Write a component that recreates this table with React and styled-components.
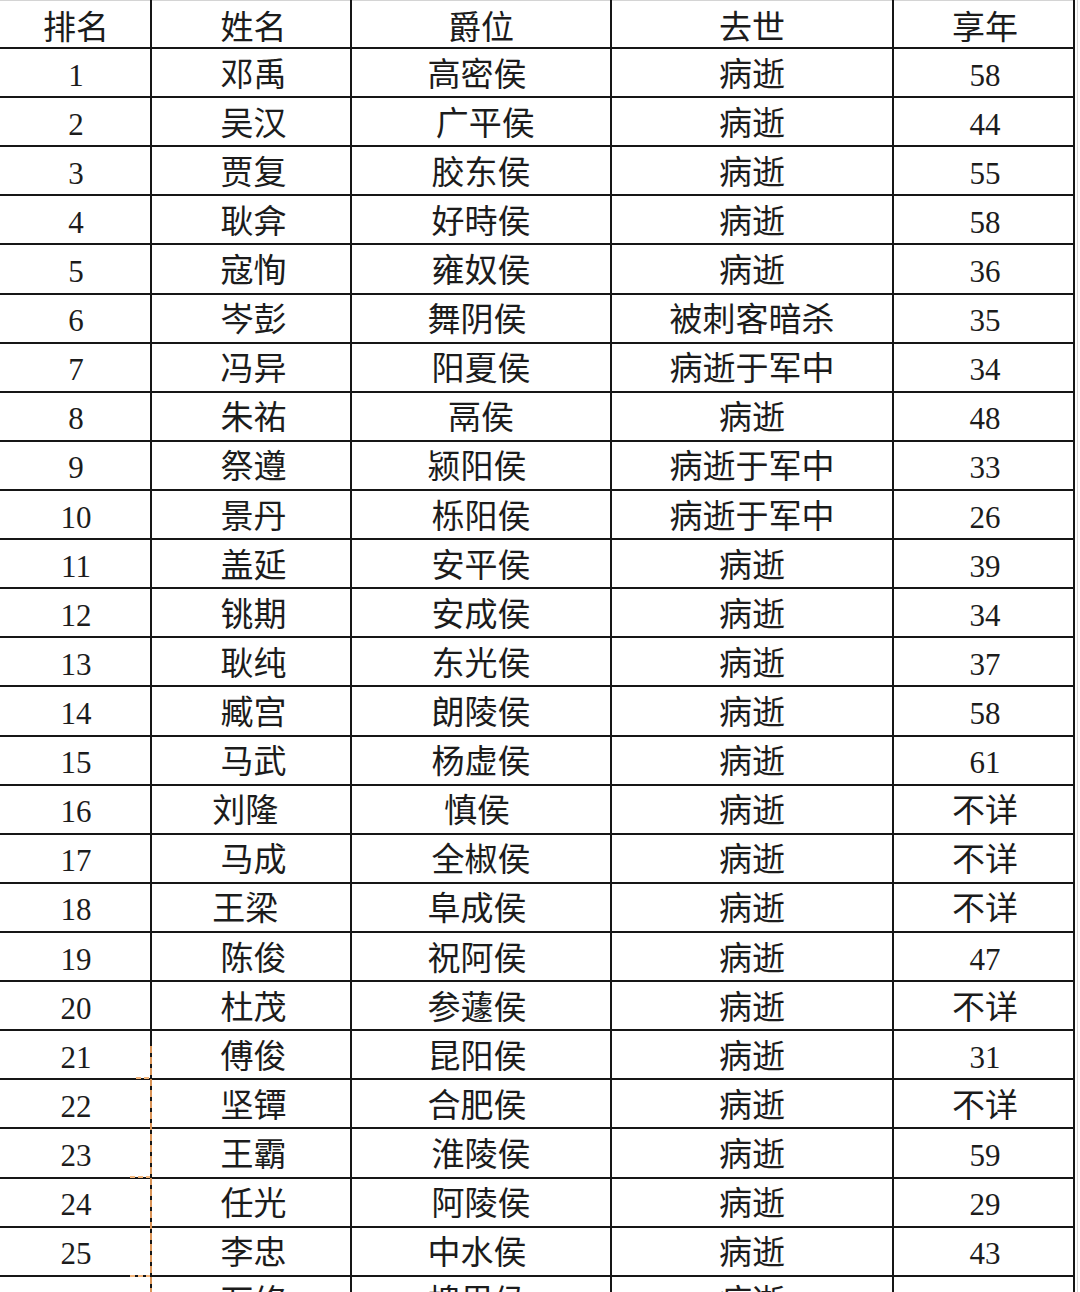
import styled, { createGlobalStyle } from 'styled-components';

const GlobalStyle = createGlobalStyle`
  html, body {
    margin: 0;
    padding: 0;
    background: #ffffff;
    overflow: hidden;
  }
`;

const HEADERS = ['排名', '姓名', '爵位', '去世', '享年'];

// The sheet's cells carry stray spaces, which push some entries off centre.
const NB = '\u00a0';

const ROWS = [
  [1, '邓禹', '高密侯' + NB, '病逝', '58'],
  [2, '吴汉', NB + '广平侯', '病逝', '44'],
  [3, '贾复', '胶东侯', '病逝', '55'],
  [4, '耿弇', '好時侯', '病逝', '58'],
  [5, '寇恂', '雍奴侯', '病逝', '36'],
  [6, '岑彭', '舞阴侯' + NB, '被刺客暗杀', '35'],
  [7, '冯异', '阳夏侯', '病逝于军中', '34'],
  [8, '朱祐', '鬲侯', '病逝', '48'],
  [9, '祭遵', '颍阳侯' + NB, '病逝于军中', '33'],
  [10, '景丹', '栎阳侯', '病逝于军中', '26'],
  [11, '盖延', '安平侯', '病逝', '39'],
  [12, '铫期', '安成侯', '病逝', '34'],
  [13, '耿纯', '东光侯', '病逝', '37'],
  [14, '臧宫', '朗陵侯', '病逝', '58'],
  [15, '马武', '杨虚侯', '病逝', '61'],
  [16, '刘隆' + NB + NB, '慎侯' + NB, '病逝', '不详'],
  [17, '马成', '全椒侯', '病逝', '不详'],
  [18, '王梁' + NB + NB, '阜成侯' + NB, '病逝', '不详'],
  [19, '陈俊', '祝阿侯' + NB, '病逝', '47'],
  [20, '杜茂', '参蘧侯' + NB, '病逝', '不详'],
  [21, '傅俊', '昆阳侯' + NB, '病逝', '31'],
  [22, '坚镡', '合肥侯' + NB, '病逝', '不详'],
  [23, '王霸', '淮陵侯', '病逝', '59'],
  [24, '任光', '阿陵侯', '病逝', '29'],
  [25, '李忠', '中水侯' + NB, '病逝', '43'],
  [26, '万修', '槐里侯' + NB, '病逝', '36'],
];

// left padding per column, the sheet's text sits a little right of centre
const COL_PAD = [2, 5, 0, 0, 3];

const Sheet = styled.div`
  position: relative;
  width: 1080px;
  height: 1292px;
  overflow: hidden;
  background: #ffffff;
`;

const Table = styled.div`
  display: grid;
  grid-template-columns: 152px 200px 260px 282px 181px;
  grid-template-rows: 49px repeat(26, 49.12px);
  width: 1075px;
  padding-right: 2px;
  border-right: 1px solid #d9d9d9;
`;

const Cell = styled.div`
  box-sizing: border-box;
  display: flex;
  align-items: center;
  justify-content: center;
  padding-top: ${p => (p.$head ? '10px' : '5px')};
  padding-left: ${p => p.$pad || 0}px;
  border-right: 2px solid #161616;
  border-bottom: 2px solid #161616;
  box-shadow: ${p => (p.$head ? 'inset 0 1px 0 #d4d4d4' : 'none')};
  font-family: 'Liberation Serif', 'Noto Sans CJK SC', serif;
  color: #1c1c1c;
  white-space: pre;
  overflow: hidden;
`;

const Text = styled.span`
  font-size: ${p => (p.$num ? '31px' : '33px')};
  line-height: 1;
`;

// Excel page-break marker over the first column edge
const PageBreak = styled.div`
  position: absolute;
  left: 150px;
  top: 1046px;
  width: 2px;
  bottom: 0;
  background: repeating-linear-gradient(
    to bottom,
    #f0a25e 0 7px,
    transparent 7px 11px
  );
  opacity: 0.9;
`;

const BreakTick = styled.div`
  position: absolute;
  left: ${p => p.$left}px;
  top: ${p => p.$top}px;
  width: ${p => 150 - p.$left}px;
  height: 2px;
  background: repeating-linear-gradient(
    to right,
    #f3b57a 0 5px,
    transparent 5px 8px
  );
`;

function Value({ value }) {
  const num = /^\d+$/.test(String(value));
  return <Text $num={num}>{value}</Text>;
}

function Row({ cells }) {
  return cells.map((value, i) => (
    <Cell key={i} $pad={COL_PAD[i]}>
      <Value value={value} />
    </Cell>
  ));
}

export default function App() {
  return (
    <Sheet>
      <GlobalStyle />
      <Table>
        {HEADERS.map((h, i) => (
          <Cell key={h} $head $pad={COL_PAD[i]}>
            <Value value={h} />
          </Cell>
        ))}
        {ROWS.map(row => (
          <Row key={row[0]} cells={row} />
        ))}
      </Table>
      <PageBreak />
      <BreakTick $left={136} $top={1077} />
      <BreakTick $left={130} $top={1176} />
      <BreakTick $left={130} $top={1275} />
    </Sheet>
  );
}
